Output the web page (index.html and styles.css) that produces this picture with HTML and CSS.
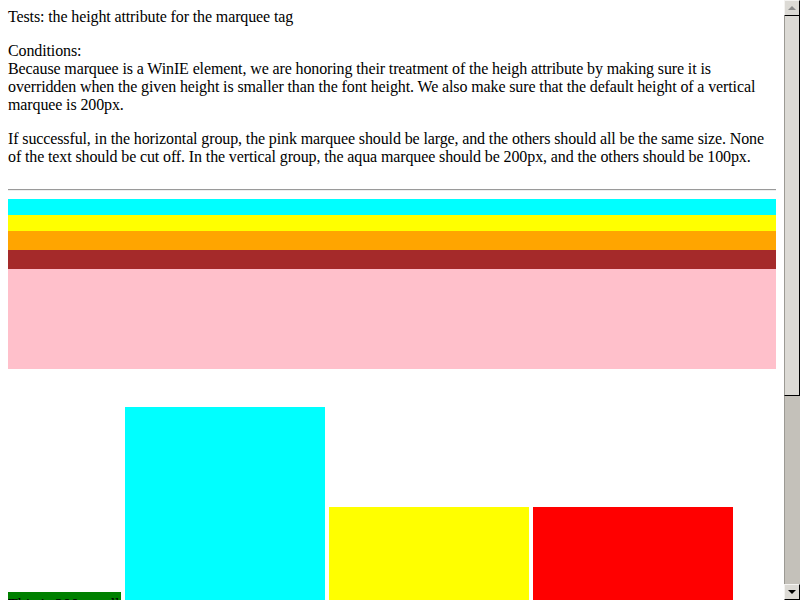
FILE: index.html
```html
<!DOCTYPE html>
<html>
<head>
<meta charset="utf-8">
<title>marquee height</title>
<link rel="stylesheet" href="styles.css">
</head>
<body>
<div class="window">
  <main class="page">
    <p class="title">Tests: the height attribute for the marquee tag</p>
    <p>Conditions:<br>Because marquee is a WinIE element, we are honoring their treatment of the heigh attribute by making sure it is overridden when the given height is smaller than the font height. We also make sure that the default height of a vertical marquee is 200px.</p>
    <p>If successful, in the horizontal group, the pink marquee should be large, and the others should all be the same size. None of the text should be cut off. In the vertical group, the aqua marquee should be 200px, and the others should be 100px.</p>
    <hr class="rule">
    <div class="hgroup">
      <div class="hbar aqua h16"></div>
      <div class="hbar yellow h16"></div>
      <div class="hbar orange h19"></div>
      <div class="hbar brown h19"></div>
      <div class="hbar pink h100"></div>
    </div>
    <div class="vgroup">
      <div class="vbox green">This is 200px tall</div>
      <div class="vbox aqua w200 tall"></div>
      <div class="vbox yellow w200 short"></div>
      <div class="vbox red w200 short"></div>
    </div>
  </main>
  <div class="scrollbar">
    <div class="sb-btn"><span class="tri up"></span></div>
    <div class="sb-thumb"></div>
    <div class="sb-track"></div>
    <div class="sb-btn"><span class="tri down"></span></div>
  </div>
</div>
</body>
</html>
```

FILE: styles.css
```css
html, body {
  margin: 0;
  padding: 0;
  background: #ffffff;
}
body {
  font-family: "Liberation Serif", "Times New Roman", serif;
  font-size: 16px;
  line-height: 18px;
  letter-spacing: -0.12px;
  color: #000;
}
.window {
  display: flex;
  width: 800px;
  height: 600px;
  overflow: hidden;
}
.page {
  flex: 1;
  min-width: 0;
  padding: 8px;
  overflow: hidden;
}
.page p {
  margin: 16px 0;
}
.page p.title {
  margin-top: 0;
}
.rule {
  margin: 23px 0 8px 0;
  border: 0;
  border-top: 1px solid #9a9a9a;
  border-bottom: 1px solid #eeeeee;
  height: 0;
}
.hgroup {
  display: flex;
  flex-direction: column;
}
.h16 { height: 16px; }
.h19 { height: 19px; }
.h100 { height: 100px; }
.aqua { background: #00ffff; }
.yellow { background: #ffff00; }
.orange { background: #ffa500; }
.brown { background: #a52a2a; }
.pink { background: #ffc0cb; }
.red { background: #ff0000; }
.green { background: #008000; }
.vgroup {
  display: flex;
  align-items: flex-end;
  gap: 4px;
  margin-top: 38px;
}
.vbox { flex: none; }
.w200 { width: 200px; }
.tall { height: 200px; }
.short { height: 100px; }
.vbox.green {
  width: 113px;
  height: 14px;
  line-height: 18px;
  letter-spacing: 0;
  overflow: hidden;
  white-space: nowrap;
  padding-top: 4px;
  margin-bottom: -3px;
}
.scrollbar {
  flex: none;
  width: 16px;
  height: 600px;
  display: flex;
  flex-direction: column;
  background: #c4c1ba;
}
.sb-btn {
  flex: none;
  box-sizing: border-box;
  height: 16px;
  width: 16px;
  background: #dcdad5;
  border-top: 1px solid #f4f3f1;
  border-left: 1px solid #f4f3f1;
  border-right: 1px solid #000;
  border-bottom: 1px solid #000;
  display: flex;
  align-items: center;
  justify-content: center;
}
.tri {
  width: 0;
  height: 0;
  border-left: 4px solid transparent;
  border-right: 4px solid transparent;
}
.tri.up { border-bottom: 4px solid #8a8a8a; }
.tri.down { border-top: 4px solid #000; }
.sb-thumb {
  flex: none;
  box-sizing: border-box;
  height: 380px;
  background: #dcdad5;
  border-left: 1px solid #9c9a94;
  border-right: 1px solid #000;
  border-bottom: 1px solid #000;
}
.sb-track {
  flex: 1;
  border-left: 1px solid #9c9a94;
}
```
